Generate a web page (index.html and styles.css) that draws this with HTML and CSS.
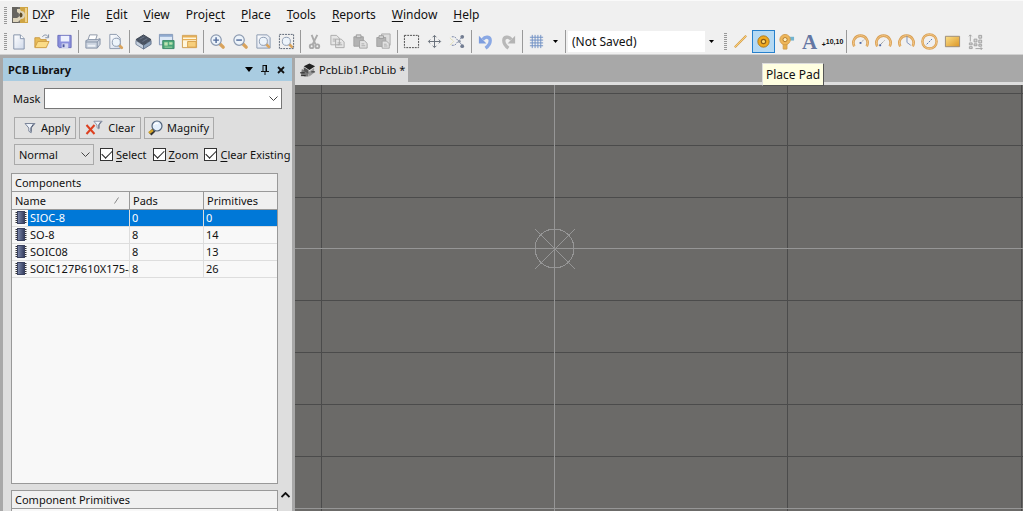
FILE: index.html
```
<!DOCTYPE html>
<html lang="en">
<head>
  <meta charset="utf-8">
  <title>PcbLib1.PcbLib</title>
  <link rel="stylesheet" href="styles.css">
</head>
<body>
  <!-- shared drawings -->
  <svg class="defs" width="0" height="0" aria-hidden="true">
    <defs>
      <linearGradient id="gold" x1="0" y1="0" x2="1" y2="1"><stop offset="0" stop-color="#fbe08a"/><stop offset="1" stop-color="#dc9524"/></linearGradient>
      <linearGradient id="paper" x1="0" y1="0" x2="1" y2="1"><stop offset="0" stop-color="#ffffff"/><stop offset="1" stop-color="#cfd9ea"/></linearGradient>
      <linearGradient id="chipfill" x1="0" y1="0" x2="1" y2="0"><stop offset="0" stop-color="#7d89ad"/><stop offset="1" stop-color="#343c5c"/></linearGradient>
      <symbol id="chip" viewBox="0 0 12 13">
        <path d="M.5 1.500h11M.5 3.500h11M.5 5.500h11M.5 7.500h11M.5 9.500h11M.5 11.500h11" stroke="#333"/>
        <rect x="2.500" y=".5" width="7" height="12" fill="url(#chipfill)" stroke="#3b4260"/>
      </symbol>
      <symbol id="lens" viewBox="0 0 18 18">
        <path d="M11.500 11.500l3.500 3.500" stroke="#d9a35c" stroke-width="3.600" stroke-linecap="round"/>
        <circle cx="7.500" cy="7.500" r="5.500" fill="#edf4fb" stroke="#8c9ab0" stroke-width="1.300"/>
      </symbol>
      <symbol id="funnel" viewBox="0 0 12 12">
        <path d="M1 1.500h10L7.200 6v4.800L4.800 9.200V6z" fill="#eef3fa" stroke="#7c869a"/>
        <path d="M9.500 2L7 5.600v4" fill="none" stroke="#4f5a72"/>
      </symbol>
      <symbol id="clipboard" viewBox="0 0 18 18">
        <path d="M2 4h10v10H2z" fill="#b3b3b3" stroke="#a0a0a0"/>
        <path d="M4.500 2h5v3h-5z" fill="#d6d6d6" stroke="#999"/>
        <path d="M8 8h5l3 3v5H8z" fill="#e2e2e2" stroke="#a3a3a3"/>
        <path d="M10 11.500h3M10 13.500h4" stroke="#aaa"/>
      </symbol>
      <symbol id="arc" viewBox="0 0 18 18">
        <path d="M2.500 14A7.500 7.500 0 1 1 15.500 14" fill="none" stroke="#d9a054" stroke-width="2.800"/>
        <path d="M2.500 14A7.500 7.500 0 1 1 15.500 14" fill="none" stroke="#f3c888" stroke-width="1"/>
      </symbol>
    </defs>
  </svg>

  <nav class="menubar">
    <span class="grip"></span>
    <svg class="logo" width="16" height="16" viewBox="0 0 16 16">
      <rect width="8" height="16" fill="#74716b"/><rect x="8" width="8" height="16" fill="#cfa544"/>
      <path d="M0 0h6v16H0z" fill="#66645f"/>
      <path d="M1 15v-4h4l3-2h2V7H8L5 5V2h3l1 2a4 4 0 1 1 0 8l-3 3z" fill="#dcd3ba"/>
      <path d="M8 5.500a2.500 2.500 0 0 1 0 5z" fill="#5d4b26"/>
      <path d="M14 1v14" stroke="#f0d28a" stroke-width="2"/>
    </svg>
    <a href="#">D<u>X</u>P</a>
    <a href="#"><u>F</u>ile</a>
    <a href="#"><u>E</u>dit</a>
    <a href="#"><u>V</u>iew</a>
    <a href="#">Proje<u>c</u>t</a>
    <a href="#"><u>P</u>lace</a>
    <a href="#"><u>T</u>ools</a>
    <a href="#"><u>R</u>eports</a>
    <a href="#"><u>W</u>indow</a>
    <a href="#"><u>H</u>elp</a>
  </nav>

  <div class="toolbar">
    <span class="grip"></span>
    <button class="tool" aria-label="New"><svg viewBox="0 0 18 18"><path d="M4 2h7l4 4v11H4z" fill="url(#paper)" stroke="#8290a8"/><path d="M11 2v4h4" fill="#fff" stroke="#8290a8"/></svg></button>
    <button class="tool" aria-label="Open"><svg viewBox="0 0 18 18"><path d="M2 15V5h5l1 2h6v8z" fill="#e8bc56" stroke="#c99a45"/><path d="M2 15.500L5 9h12l-3 6.500z" fill="#fbdc87" stroke="#cf9f48"/><path d="M10 4c2-3 5-2 6 0M16.500 1.500V5H13" fill="none" stroke="#7d8ca5"/></svg></button>
    <button class="tool" aria-label="Save"><svg viewBox="0 0 18 18"><path d="M2 2.500h14v13H3.500L2 14z" fill="#8a8fdc" stroke="#6a6fba"/><path d="M5 3h9v6H5z" fill="#eef1fd"/><path d="M6 11h7v5H6z" fill="#d5d8f0"/><path d="M7 12h2v3H7z" fill="#4d589d"/></svg></button>
    <span class="sep"></span>
    <button class="tool" aria-label="Print"><svg viewBox="0 0 18 18"><path d="M6 2h8l-2 6H4z" fill="#fff" stroke="#8c96a6"/><path d="M2 8l3-1h9l3-1v6l-3 4H2z" fill="#ccd4e0" stroke="#8491a6"/><path d="M2 9.500h12l3-3M14 9.500V16" fill="none" stroke="#8491a6"/><path d="M4 12.500h8v2H4z" fill="#eef2f7"/></svg></button>
    <button class="tool" aria-label="Print preview"><svg viewBox="0 0 18 18"><path d="M3 1.500h7l4 4v11H3z" fill="url(#paper)" stroke="#8c99ad"/><use href="#lens" x="4" y="4" width="14" height="14"/></svg></button>
    <span class="sep"></span>
    <button class="tool" aria-label="Library"><svg viewBox="0 0 18 18"><path d="M1 8l8 5v4l-8-5z" fill="#c7d2df" stroke="#75849a"/><path d="M17 8l-8 5v4l8-5z" fill="#8fa4bb" stroke="#65758d"/><path d="M1 7l8-5 8 5-8 5.500z" fill="#4a5464" stroke="#3c4452"/><path d="M5 6.500l5-2.500M8 9l5-3" stroke="#6c7789"/></svg></button>
    <button class="tool" aria-label="Board"><svg viewBox="0 0 18 18"><path d="M1.500 1.500h14v11h-14z" fill="#dce8f6" stroke="#7d93b4"/><path d="M2 3h13" stroke="#8fa9cf" stroke-width="2"/><path d="M5 8h12v8.500H5z" fill="#4aa67a" stroke="#3c8a68"/><path d="M7 10h3v3H7zM12 10h3v2h-3zM7 15h8" fill="#c5e7ba" stroke="#a2d5a1"/></svg></button>
    <button class="tool" aria-label="Sheet"><svg viewBox="0 0 18 18"><path d="M1.500 2.500h15v13h-15z" fill="#fff6dc" stroke="#ce9c4c"/><path d="M2 4h14M2 7h14" stroke="#e7af55" stroke-width="1.500"/><path d="M7 9h9v6H7z" fill="#f7cf7c" stroke="#d7a04c"/></svg></button>
    <span class="sep"></span>
    <button class="tool" aria-label="Zoom in"><svg viewBox="0 0 18 18"><use href="#lens" width="18" height="18"/><path d="M4.500 7.500h6M7.500 4.500v6" stroke="#506999" stroke-width="1.500"/></svg></button>
    <button class="tool" aria-label="Zoom out"><svg viewBox="0 0 18 18"><use href="#lens" width="18" height="18"/><path d="M4.500 7.500h6" stroke="#506999" stroke-width="1.500"/></svg></button>
    <button class="tool" aria-label="Fit document"><svg viewBox="0 0 18 18"><path d="M2 2h11l3 3v11H2z" fill="url(#paper)" stroke="#8797ae"/><use href="#lens" x="3" y="3" width="14" height="14"/></svg></button>
    <button class="tool" aria-label="Zoom area"><svg viewBox="0 0 18 18"><path d="M1.500 1.500h15v15h-15z" fill="none" stroke="#566171" stroke-dasharray="2 1"/><use href="#lens" x="3" y="3" width="14" height="14"/></svg></button>
    <span class="sep"></span>
    <button class="tool" aria-label="Cut"><svg viewBox="0 0 18 18"><path d="M6 2l4 10M12 2L7 12" stroke="#aaa" stroke-width="2"/><circle cx="6" cy="14" r="2" fill="none" stroke="#aaa" stroke-width="2"/><circle cx="12" cy="14" r="2" fill="none" stroke="#aaa" stroke-width="2"/></svg></button>
    <button class="tool" aria-label="Copy"><svg viewBox="0 0 18 18"><path d="M2 2.500h6l3 3v7H2zM7 6.500h6l3 3v6H7z" fill="#e6e6e6" stroke="#aaa"/><path d="M4 6.500h3M4 8.500h3M9 10.500h4M9 12.500h5" stroke="#aaa"/></svg></button>
    <button class="tool" aria-label="Paste"><svg viewBox="0 0 18 18"><use href="#clipboard" width="18" height="18"/></svg></button>
    <button class="tool" aria-label="Paste array"><svg viewBox="0 0 18 18"><path d="M7 1h9v12H7z" fill="#ddd" stroke="#aaa"/><use href="#clipboard" y="1" width="17" height="17"/></svg></button>
    <span class="sep"></span>
    <button class="tool" aria-label="Select area"><svg viewBox="0 0 18 18"><path d="M1.500 2.500h15v13h-15z" fill="none" stroke="#444" stroke-dasharray="2 1"/></svg></button>
    <button class="tool" aria-label="Move"><svg viewBox="0 0 18 18"><path d="M9 3v12M3 9h12M7 4.500L9 2.500l2 2M7 13.500l2 2 2-2M4.500 7l-2 2 2 2M13.500 7l2 2-2 2" fill="none" stroke="#646b76"/></svg></button>
    <button class="tool" aria-label="Deselect"><svg viewBox="0 0 18 18"><path d="M3 4h3l8 9M3 13h3l8-9" fill="none" stroke="#6f7da2" stroke-dasharray="2 1"/><path d="M1 5l4 4-4 4" fill="none" stroke="#d4ce83" stroke-dasharray="1 1"/><circle cx="14" cy="4" r="2" fill="#727c91"/><circle cx="11" cy="9" r="1.500" fill="#939baa"/><circle cx="14" cy="14" r="2" fill="#727c91"/></svg></button>
    <span class="sep"></span>
    <button class="tool" aria-label="Undo"><svg viewBox="0 0 18 18"><path d="M6 7c3-4 8-3 8 1 0 3-2 6-5 8" fill="none" stroke="#8aa8e4" stroke-width="3.500"/><path d="M2 3v8h8z" fill="#7d9dde"/></svg></button>
    <button class="tool" aria-label="Redo"><svg viewBox="0 0 18 18"><path d="M12 7C9 3 4 4 4 8c0 3 2 6 5 8" fill="none" stroke="#b8b8b8" stroke-width="3.500"/><path d="M16 3v8H8z" fill="#b4b4b4"/></svg></button>
    <span class="sep"></span>
    <button class="tool" aria-label="Grid"><svg viewBox="0 0 18 18"><path d="M4.500 2v14M7.500 2v14M10.500 2v14M13.500 2v14M2 4.500h14M2 7.500h14M2 10.500h14M2 13.500h14" stroke="#6f8fc4"/></svg></button>
    <button class="drop" aria-label="Grid options"><svg width="5" height="3" viewBox="0 0 5 3"><path d="M0 0h5L2.500 3z"/></svg></button>
    <span class="sep"></span>
    <span class="picker">
      <select class="saved" aria-label="View"><option>(Not Saved)</option></select>
      <svg width="5" height="3" viewBox="0 0 5 3"><path d="M0 0h5L2.500 3z"/></svg>
    </span>
    <span class="grip"></span>
    <button class="tool" aria-label="Place line"><svg viewBox="0 0 18 18"><path d="M3 15L15 3" stroke="#d39d4c" stroke-width="2.200"/><path d="M3 15L15 3" stroke="#ffd477"/></svg></button>
    <span class="tipped">
      <button class="tool active" aria-label="Place Pad"><svg viewBox="0 0 18 18"><circle cx="9" cy="9" r="6" fill="#f0a91d" stroke="#a97722"/><circle cx="9" cy="9" r="2.300" fill="#ffda70" stroke="#8b5e19" stroke-width="1.300"/></svg></button>
      <span class="tip" role="tooltip">Place Pad</span>
    </span>
    <button class="tool" aria-label="Place via"><svg viewBox="0 0 18 18"><path d="M9 4h8v4H9z" fill="#72b4d0"/><path d="M5.500 9h4v8h-4z" fill="#e9b04b" stroke="#d39d4c"/><circle cx="7.500" cy="7" r="5.500" fill="#eeb65a" stroke="#d39d4c"/><circle cx="7.500" cy="7" r="2.200" fill="#fff1c5" stroke="#b1792b"/></svg></button>
    <button class="tool letter" aria-label="Place string">A</button>
    <button class="tool coord" aria-label="Place coordinate"><span>+</span>10,10</button>
    <span class="sep"></span>
    <button class="tool" aria-label="Arc by centre"><svg viewBox="0 0 18 18"><use href="#arc" width="18" height="18"/><path d="M9 10l4-3" stroke="#999" stroke-dasharray="1 1"/><path d="M8 9.500h2v2H8z" fill="#4d68a5"/></svg></button>
    <button class="tool" aria-label="Arc by edge"><svg viewBox="0 0 18 18"><use href="#arc" width="18" height="18"/><path d="M5 13l5-5" stroke="#777" stroke-dasharray="1 1"/><path d="M4.500 12h2v2h-2z" fill="#4d68a5"/></svg></button>
    <button class="tool" aria-label="Arc any angle"><svg viewBox="0 0 18 18"><use href="#arc" width="18" height="18"/><path d="M9.500 3v7l4 3" fill="none" stroke="#7b90bb"/></svg></button>
    <button class="tool" aria-label="Full circle"><svg viewBox="0 0 18 18"><circle cx="9" cy="9" r="7.500" fill="none" stroke="#d9a054" stroke-width="2.600"/><circle cx="9" cy="9" r="7.500" fill="none" stroke="#f3c888"/><path d="M6 12l6-6" stroke="#5877ae" stroke-dasharray="2 1"/></svg></button>
    <button class="tool" aria-label="Fill"><svg viewBox="0 0 18 18"><path d="M1.500 3.500h15v11h-15z" fill="url(#gold)" stroke="#9a8a76"/></svg></button>
    <button class="tool" aria-label="Array paste"><svg viewBox="0 0 18 18"><path d="M3.500 9V2M2 3.500l1.500-1.500L5 3.500M9 16.500h7M14.500 15l1.500 1.500-1.500 1.500" fill="none" stroke="#a2a2a2"/><path d="M7.500 6.500h3v3h-3zM12.500 2.500h3v3h-3zM12.500 7.500h3v3h-3zM2.500 10.500h3v2h-3zM7.500 11.500h3v2h-3zM12.500 12h3v2h-3zM2.500 14.500h3v2h-3z" fill="#d6d6d6" stroke="#a2a2a2"/></svg></button>
  </div>

  <main class="workspace">
    <aside class="panel">
      <header class="panel-head">
        <h2>PCB Library</h2>
        <button aria-label="Panel menu"><svg width="8" height="5" viewBox="0 0 8 5"><path d="M0 0h8L4 5z"/></svg></button>
        <button aria-label="Pin"><svg width="8" height="10" viewBox="0 0 8 10"><path d="M2 0v6M5.500 0v6M0 6.500h8M4 7v3M2 .5h4" fill="none" stroke="#111"/><path d="M4.500 0H6v6H4.500z"/></svg></button>
        <button aria-label="Close"><svg width="8" height="8" viewBox="0 0 8 8"><path d="M1 1l6 6M7 1L1 7" stroke="#111" stroke-width="1.800"/></svg></button>
      </header>
      <div class="panel-body">
        <div class="mask">
          <label for="mask">Mask</label>
          <span class="picker">
            <select id="mask"><option></option></select>
            <svg width="9" height="6" viewBox="0 0 9 6"><path d="M.5 .5l4 4 4-4" fill="none" stroke="#444"/></svg>
          </span>
        </div>
        <div class="actions">
          <button class="apply"><svg width="12" height="12"><use href="#funnel" width="12" height="12"/></svg>Apply</button>
          <button class="clear"><svg width="18" height="16" viewBox="0 0 18 16"><use href="#funnel" x="8" width="10" height="10"/><path d="M1.500 5l8 9M9.500 5l-8 9" stroke="#dd4020" stroke-width="2"/></svg>Clear</button>
          <button class="magnify"><svg width="15" height="16" viewBox="0 0 15 16"><path d="M6 10l-4 4" stroke="#343434" stroke-width="4"/><path d="M5 10l-4 3" stroke="#d6a527" stroke-width="2.500"/><circle cx="9" cy="6" r="5" fill="#e4effb" stroke="#53657c" stroke-width="1.200"/><path d="M6 5c1-2 3-2 4-1" fill="none" stroke="#fff" stroke-width="1.500"/></svg>Magnify</button>
        </div>
        <div class="options">
          <span class="picker">
            <select class="mode" aria-label="Mode"><option>Normal</option></select>
            <svg width="9" height="6" viewBox="0 0 9 6"><path d="M.5 .5l4 4 4-4" fill="none" stroke="#444"/></svg>
          </span>
          <label><input type="checkbox" checked><span><u>S</u>elect</span></label>
          <label><input type="checkbox" checked><span><u>Z</u>oom</span></label>
          <label><input type="checkbox" checked><span><u>C</u>lear Existing</span></label>
        </div>
        <section class="list">
          <h3>Components</h3>
          <table>
            <thead>
              <tr><th class="name"><span>Name<svg width="5" height="7" viewBox="0 0 5 7"><path d="M.5 6.500L4.500 .5" stroke="#888"/></svg></span></th><th class="pads">Pads</th><th>Primitives</th></tr>
            </thead>
            <tbody>
              <tr class="selected"><td><svg><use href="#chip"/></svg><span>SIOC-8</span></td><td>0</td><td>0</td></tr>
              <tr><td><svg><use href="#chip"/></svg><span>SO-8</span></td><td>8</td><td>14</td></tr>
              <tr><td><svg><use href="#chip"/></svg><span>SOIC08</span></td><td>8</td><td>13</td></tr>
              <tr><td><svg><use href="#chip"/></svg><span>SOIC127P610X175-8</span></td><td>8</td><td>26</td></tr>
            </tbody>
          </table>
        </section>
        <div class="bottom">
          <section class="primitives"><h3>Component Primitives</h3></section>
          <button class="scroll-up" aria-label="Scroll up"><svg width="9" height="6" viewBox="0 0 9 6"><path d="M.5 5l4-4 4 4" fill="none" stroke="#111" stroke-width="1.800"/></svg></button>
        </div>
      </div>
    </aside>

    <section class="editor">
      <div class="tabs">
        <a class="tab" href="#"><svg width="16" height="14" viewBox="0 0 17 14"><path d="M2 6l7 4v4H5L1 12z" fill="#777"/><path d="M9 9l6-4v5l-5 4z" fill="#999"/><path d="M4 3l6-3 6 3-6 4z" fill="#222"/><path d="M4 4v4l5 3V7z" fill="#555"/><path d="M0 10h5M1 13h5M12 9h4" stroke="#222"/></svg>PcbLib1.PcbLib *</a>
      </div>
      <svg class="board" shape-rendering="crispEdges">
        <g stroke="#4b4b4b">
          <path d="M26.500 0v2000M492.500 0v2000M726.500 0v2000"/>
          <path d="M0 8.500h4000M0 60.500h4000M0 112.500h4000M0 215.500h4000M0 267.500h4000M0 319.500h4000M0 371.500h4000"/>
        </g>
        <g stroke="#969696" fill="none">
          <path d="M259.500 0v2000M0 163.500h4000M0 423.500h4000"/>
          <circle cx="259.500" cy="163.500" r="19.500"/>
          <path d="M240 144l40 40M280 144l-40 40"/>
        </g>
      </svg>
    </section>
  </main>
</body>
</html>
```
FILE: styles.css
```
* {
  box-sizing: border-box;
}

body {
  margin: 0;
  height: 100vh;
  display: flex;
  flex-direction: column;
  overflow: hidden;
  background: #a8a8a8;
  color: #111;
  font-family: "Noto Sans", "Open Sans", sans-serif;
  font-size: 11px;
  line-height: 16px;
}

button, select, input {
  font: inherit;
  color: inherit;
  margin: 0;
}

button {
  padding: 0;
  border: none;
  background: none;
}

svg {
  flex: none;
}

a {
  color: inherit;
  text-decoration: none;
}

u {
  text-underline-offset: 2px;
}

.defs {
  position: absolute;
}

.menubar {
  display: flex;
  align-items: center;
  gap: 16px;
  height: 29px;
  padding-left: 4px;
  background: #f0f0f0;
  border-top: 1px solid #fafafa;
  font-size: 12px;
}

.grip {
  flex: none;
  width: 3px;
  height: 17px;
  background: repeating-linear-gradient(#999 0 1px, #f0f0f0 1px 2px);
}

.menubar .grip {
  margin-right: -11px;
}

.logo {
  margin-right: -12px;
}

.toolbar {
  display: flex;
  align-items: center;
  height: 26px;
  padding-left: 4px;
  background: #f0f0f0;
  border-bottom: 1px solid #d0d0d0;
}

.tool {
  flex: none;
  display: flex;
  align-items: center;
  justify-content: center;
  width: 23px;
  height: 23px;
}

.tool svg {
  width: 17px;
  height: 17px;
}

.tool.active {
  background: #b5d9f3;
  border: 1px solid #2680cc;
}

.letter {
  font-family: "Liberation Serif", serif;
  font-size: 21px;
  font-weight: bold;
  color: #6376a3;
}

.coord {
  font-family: "Liberation Sans", sans-serif;
  font-size: 7px;
  font-weight: bold;
}

.coord span {
  align-self: flex-end;
}

.sep {
  flex: none;
  width: 1px;
  height: 23px;
  margin: 0 2px;
  background: #999;
}

.drop {
  display: flex;
  align-items: center;
  justify-content: center;
  width: 15px;
  height: 23px;
}

.picker {
  display: grid;
  align-items: center;
}

.picker > * {
  grid-area: 1 / 1;
}

.picker > svg {
  justify-self: end;
  margin-right: 4px;
  pointer-events: none;
}

select {
  appearance: none;
  width: 100%;
  border: 1px solid #777;
  border-radius: 0;
  background: #fff;
}

.saved {
  width: 150px;
  height: 21px;
  padding: 0 4px;
  border: none;
  font-size: 12px;
  background: linear-gradient(to left, #f0f0f0 13px, #fff 13px);
}

.toolbar > .picker + .grip {
  margin: 0 2px 0 6px;
}

.tipped {
  position: relative;
}

.tip {
  position: absolute;
  top: 33px;
  left: 10px;
  z-index: 2;
  padding: 2px 3px;
  border: 1px solid #555;
  border-top-color: #ddd;
  border-left-color: #ddd;
  background: #ffffe1;
  font-size: 12px;
  line-height: 17px;
  white-space: nowrap;
}

.workspace {
  flex: 1;
  display: flex;
  min-height: 0;
}

.panel {
  flex: none;
  display: flex;
  flex-direction: column;
  width: 289px;
  margin: 3px 3px 0 3px;
  background: #dedede;
}

.panel-head {
  display: flex;
  align-items: center;
  gap: 8px;
  height: 23px;
  padding: 0 7px 0 5px;
  background: #a9cce1;
}

.panel-head h2 {
  flex: 1;
  margin: 0;
  font-size: 11px;
}

.panel-head button {
  display: flex;
}

.panel-body {
  flex: 1;
  display: flex;
  flex-direction: column;
  min-height: 0;
  padding: 7px 0 0 8px;
}

.mask {
  display: flex;
  align-items: center;
  gap: 4px;
  padding: 0 10px 0 2px;
}

.mask .picker {
  flex: 1;
}

.mask select {
  height: 21px;
}

.actions {
  display: flex;
  gap: 3px;
  padding: 8px 0 5px 3px;
}

.actions button {
  display: flex;
  align-items: center;
  justify-content: flex-end;
  gap: 5px;
  width: 62px;
  height: 22px;
  padding-right: 5px;
  border: 1px solid #aaa;
  background: #e1e1e1;
}

.actions .magnify {
  width: 70px;
  padding-right: 4px;
  gap: 4px;
}

.options {
  display: flex;
  align-items: center;
  gap: 6px;
  padding-left: 3px;
  white-space: nowrap;
}

.mode {
  width: 80px;
  height: 21px;
  padding: 0 4px;
  border-color: #aaa;
  background: #e1e1e1;
}

.options label {
  display: flex;
  align-items: center;
  gap: 3px;
}

input[type="checkbox"] {
  appearance: none;
  display: grid;
  place-items: center;
  width: 13px;
  height: 13px;
  border: 1px solid #333;
  background: #fff;
}

input[type="checkbox"]:checked::before {
  content: "";
  width: 9px;
  height: 5px;
  margin-bottom: 3px;
  border-left: 1px solid #222;
  border-bottom: 1px solid #222;
  transform: rotate(-45deg);
}

.list, .primitives {
  border: 1px solid #999;
  background: #f8f8f8;
}

.list {
  flex: 1;
  min-height: 0;
  margin: 8px 14px 0 0;
}

h3 {
  height: 18px;
  margin: 0;
  padding: 0 3px;
  border-bottom: 1px solid #999;
  background: #f0f0f0;
  font-size: 11px;
  font-weight: normal;
  line-height: 18px;
}

table {
  width: 100%;
  table-layout: fixed;
  border-collapse: separate;
  border-spacing: 0;
}

th, td {
  height: 17px;
  padding: 0 3px;
  overflow: hidden;
  border-right: 1px solid #ddd;
  border-bottom: 1px solid #ddd;
  text-align: left;
  white-space: nowrap;
  font-weight: normal;
}

th {
  height: 18px;
  border-color: #999;
  background: #f0f0f0;
}

td + td {
  padding-left: 2px;
}

th:last-child, td:last-child {
  border-right: none;
}

.name {
  width: 118px;
}

.name span {
  display: flex;
  align-items: center;
  justify-content: space-between;
  padding-right: 7px;
}

.pads {
  width: 74px;
}

td svg {
  width: 12px;
  height: 13px;
  margin-right: 3px;
  vertical-align: top;
  margin-top: 1px;
}

td:first-child {
  padding-right: 0;
}

.selected td {
  background: #0078d7;
  color: #fff;
}

.selected td:first-child {
  background: linear-gradient(to right, #f8f8f8 16px, #0078d7 16px);
}

.bottom {
  flex: none;
  display: flex;
  height: 21px;
  margin-top: 6px;
  overflow: hidden;
}

.primitives {
  flex: 1;
  height: 60px;
}

.scroll-up {
  display: flex;
  justify-content: center;
  width: 14px;
  padding-top: 2px;
}

.editor {
  flex: 1;
  display: flex;
  flex-direction: column;
  min-width: 0;
}

.tabs {
  display: flex;
  padding-top: 3px;
  border-bottom: 3px solid #dedede;
}

.tab {
  display: flex;
  align-items: center;
  gap: 3px;
  height: 24px;
  padding: 0 3px 0 5px;
  background: #dedede;
}

.board {
  flex: 1;
  width: 100%;
  min-height: 0;
  background: #6b6a68;
}
```
